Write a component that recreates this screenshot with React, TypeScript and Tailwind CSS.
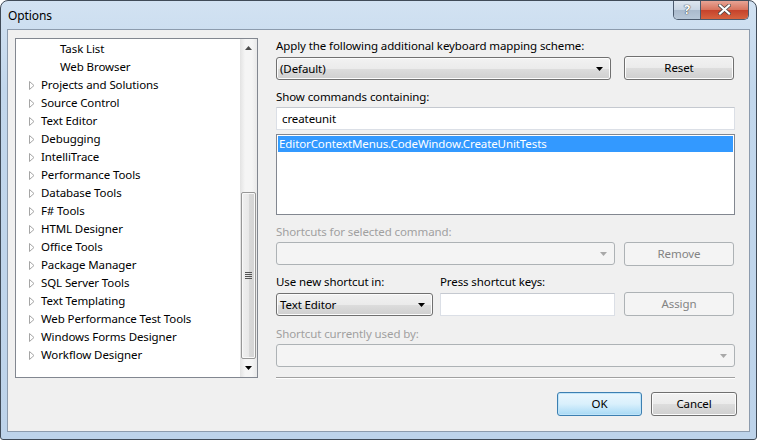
import React from 'react';

const font = { fontFamily: '"Segoe UI", "Noto Sans", "DejaVu Sans", sans-serif' };

const treeItems: { label: string; child?: boolean }[] = [
  { label: 'Task List', child: true },
  { label: 'Web Browser', child: true },
  { label: 'Projects and Solutions' },
  { label: 'Source Control' },
  { label: 'Text Editor' },
  { label: 'Debugging' },
  { label: 'IntelliTrace' },
  { label: 'Performance Tools' },
  { label: 'Database Tools' },
  { label: 'F# Tools' },
  { label: 'HTML Designer' },
  { label: 'Office Tools' },
  { label: 'Package Manager' },
  { label: 'SQL Server Tools' },
  { label: 'Text Templating' },
  { label: 'Web Performance Test Tools' },
  { label: 'Windows Forms Designer' },
  { label: 'Workflow Designer' },
];

function Expander() {
  return (
    <svg width="6" height="9" viewBox="0 0 6 9" className="shrink-0">
      <path d="M0.5 0.5 L5 4.5 L0.5 8.5 Z" fill="#fff" stroke="#a5a5a5" strokeWidth="1" />
    </svg>
  );
}

function Arrow({ disabled }: { disabled?: boolean }) {
  return (
    <svg width="7" height="4" viewBox="0 0 7 4">
      <path d="M0 0 H7 L3.5 4 Z" fill={disabled ? '#a8a8a8' : '#000'} />
    </svg>
  );
}

function Button({
  children,
  disabled,
  primary,
  className = '',
}: {
  children: React.ReactNode;
  disabled?: boolean;
  primary?: boolean;
  className?: string;
}) {
  if (disabled) {
    return (
      <div
        className={`flex items-center justify-center rounded-[3px] border border-[#adb2b5] bg-[#f4f4f4] text-[#838383] ${className}`}
      >
        {children}
      </div>
    );
  }
  if (primary) {
    return (
      <div
        className={`flex items-center justify-center rounded-[3px] border border-[#3c7fb1] bg-gradient-to-b from-[#eaf6fd] via-[#d9f0fc] to-[#a7d9f5] text-black shadow-[inset_0_0_0_1px_#bfe4f9] ${className}`}
      >
        {children}
      </div>
    );
  }
  return (
    <div
      className={`flex items-center justify-center rounded-[3px] border border-[#707070] bg-[linear-gradient(#f2f2f2_0%,#ebebeb_50%,#dddddd_51%,#cfcfcf_100%)] text-black shadow-[inset_0_0_0_1px_#fcfcfc] ${className}`}
    >
      {children}
    </div>
  );
}

function Combo({
  value,
  disabled,
  className = '',
}: {
  value?: string;
  disabled?: boolean;
  className?: string;
}) {
  if (disabled) {
    return (
      <div
        className={`flex items-center justify-end rounded-[3px] border border-[#adb2b5] bg-[#f4f4f4] pr-[7px] ${className}`}
      >
        <Arrow disabled />
      </div>
    );
  }
  return (
    <div
      className={`flex items-center rounded-[3px] border border-[#707070] bg-[linear-gradient(#f2f2f2_0%,#ebebeb_50%,#dddddd_51%,#cfcfcf_100%)] pl-[3px] pr-[7px] shadow-[inset_0_0_0_1px_#fcfcfc] ${className}`}
    >
      <span className="flex-1">{value}</span>
      <Arrow />
    </div>
  );
}

function Scrollbar() {
  return (
    <div className="flex w-[17px] flex-col bg-[linear-gradient(90deg,#e3e3e3,#f5f5f5_30%,#f5f5f5_70%,#e9e9e9)]">
      <div className="flex h-[17px] items-center justify-center">
        <svg width="7" height="4" viewBox="0 0 7 4">
          <path d="M0 4 H7 L3.5 0 Z" fill="#4d4d4d" />
        </svg>
      </div>
      <div className="flex-1" />
      <div className="mx-[1px] flex h-[167px] items-center justify-center rounded-[2px] border border-[#979797] bg-[linear-gradient(90deg,#f0f0f0,#e8e8e8_50%,#d8d8d8_51%,#d4d4d4)] shadow-[inset_0_0_0_1px_#f8f8f8]">
        <div className="flex flex-col gap-[1px]">
          <div className="h-[1px] w-[7px] bg-[#555]" />
          <div className="h-[1px] w-[7px] bg-[#555]" />
          <div className="h-[1px] w-[7px] bg-[#555]" />
          <div className="h-[1px] w-[7px] bg-[#555]" />
        </div>
      </div>
      <div className="flex h-[18px] items-center justify-center">
        <Arrow />
      </div>
    </div>
  );
}

function Label({ children, disabled }: { children: React.ReactNode; disabled?: boolean }) {
  return (
    <div className={`h-[16px] leading-[16px] ${disabled ? 'text-[#a0a0a0]' : 'text-black'}`}>
      {children}
    </div>
  );
}

export default function App() {
  return (
    <div
      style={font}
      className="relative h-[440px] w-[757px] overflow-hidden rounded-t-[8px] rounded-b-[3px] border border-[#404b58] bg-[linear-gradient(180deg,#d2e2f2_0%,#c2d7ec_20%,#bdd3ea_100%)] text-[11.5px] tracking-[-0.1px] text-black"
    >
      {/* caption buttons */}
      <div className="absolute right-[7px] top-[-1px] flex h-[20px] overflow-hidden rounded-b-[5px] border border-t-0 border-[#4b5a6d]">
        <div className="flex w-[27px] items-center justify-center border-r border-[#4b5a6d] bg-[linear-gradient(#dfe7f0_0%,#c9d6e4_50%,#a9b9cc_51%,#b7c7d8_100%)] text-[13px] font-bold text-white [text-shadow:0_0_1px_#333,0_0_1px_#333]">
          ?
        </div>
        <div className="flex w-[47px] items-center justify-center bg-[linear-gradient(#e9a99b_0%,#d8755f_50%,#c4402a_51%,#d6633f_100%)]">
          <svg width="13" height="11" viewBox="0 0 13 11">
            <path
              d="M2 1.5 L11 9.5 M11 1.5 L2 9.5"
              stroke="#444"
              strokeWidth="3.6"
              strokeLinecap="square"
            />
            <path
              d="M2 1.5 L11 9.5 M11 1.5 L2 9.5"
              stroke="#fff"
              strokeWidth="2.2"
              strokeLinecap="square"
            />
          </svg>
        </div>
      </div>

      <div className="flex h-[28px] items-center pl-[7px] pt-[2px] text-[12px]">Options</div>

      <div className="mx-[6px] h-[403px] border border-[#8c9bad] bg-[#f0f0f0]">
        <div className="flex pl-[7px] pt-[8px]">
          {/* tree */}
          <div className="flex h-[340px] w-[243px] border border-[#828790] bg-white">
            <div className="flex-1 pt-[1px]">
              {treeItems.map((item) => (
                <div key={item.label} className="flex h-[18px] items-center">
                  {item.child ? (
                    <span className="pl-[44px]">{item.label}</span>
                  ) : (
                    <>
                      <span className="flex w-[25px] justify-end pr-[6px]">
                        <Expander />
                      </span>
                      <span>{item.label}</span>
                    </>
                  )}
                </div>
              ))}
            </div>
            <Scrollbar />
          </div>

          {/* right side */}
          <div className="ml-[18px] flex w-[459px] flex-col">
            <Label>Apply the following additional keyboard mapping scheme:</Label>
            <div className="mt-[3px] flex">
              <Combo value="(Default)" className="h-[23px] w-[335px]" />
              <Button className="ml-[13px] h-[24px] w-[110px] -translate-y-[1px]">Reset</Button>
            </div>
            <div className="mt-[8px]">
              <Label>Show commands containing:</Label>
            </div>
            <div className="mt-[2px] flex h-[23px] items-center border border-[#dbdfe6] border-t-[#c5c9d0] bg-white pl-[5px]">
              createunit
            </div>
            <div className="mt-[4px] h-[81px] border border-[#828790] bg-white p-[1px]">
              <div className="flex h-[16px] items-center bg-[#3399ff] pl-[1px] text-white">
                EditorContextMenus.CodeWindow.CreateUnitTests
              </div>
            </div>
            <div className="mt-[9px]">
              <Label disabled>Shortcuts for selected command:</Label>
            </div>
            <div className="mt-[2px] flex">
              <Combo disabled className="h-[23px] w-[339px]" />
              <Button disabled className="ml-[9px] h-[24px] w-[110px]">
                Remove
              </Button>
            </div>
            <div className="mt-[8px] flex">
              <div className="w-[164px]">
                <Label>Use new shortcut in:</Label>
              </div>
              <Label>Press shortcut keys:</Label>
            </div>
            <div className="mt-[3px] flex">
              <Combo value="Text Editor" className="h-[23px] w-[157px]" />
              <div className="ml-[7px] h-[23px] w-[175px] border border-[#dbdfe6] border-t-[#c5c9d0] bg-white" />
              <Button disabled className="ml-[9px] h-[24px] w-[110px] -translate-y-[1px]">
                Assign
              </Button>
            </div>
            <div className="mt-[9px]">
              <Label disabled>Shortcut currently used by:</Label>
            </div>
            <div className="mt-[2px]">
              <Combo disabled className="h-[23px] w-[459px]" />
            </div>
            <div className="mt-[10px] h-[1px] w-[459px] bg-[#a0a0a0] shadow-[0_1px_0_#ffffff]" />
          </div>
        </div>

        <div className="mt-[14px] flex justify-end pr-[12px]">
          <Button primary className="h-[24px] w-[85px]">
            OK
          </Button>
          <Button className="ml-[9px] h-[24px] w-[86px]">Cancel</Button>
        </div>
      </div>
    </div>
  );
}
